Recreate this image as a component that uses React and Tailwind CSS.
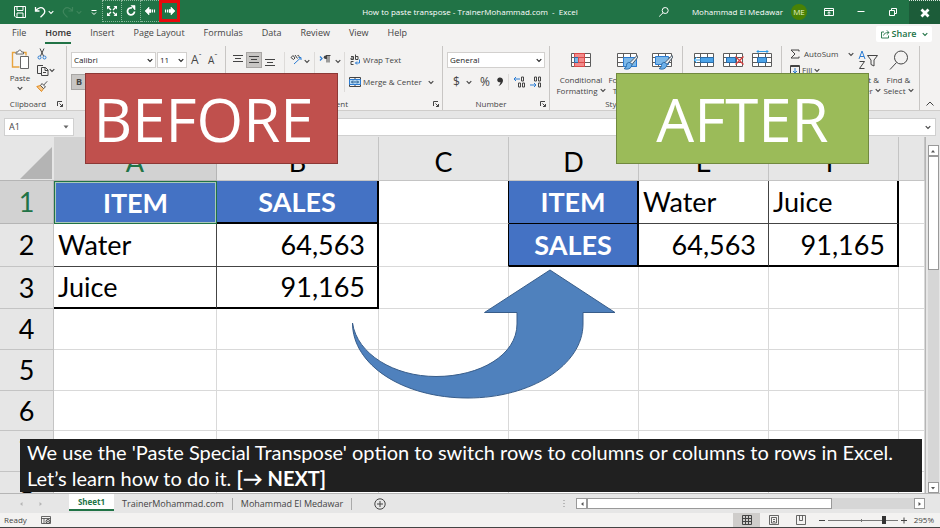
import React from "react";

function Chevron({ className = "" }) {
  return (
    <svg className={"h-[5px] w-[6px] shrink-0 " + className} viewBox="0 0 6 5" fill="none" stroke="currentColor" strokeWidth="1.1">
      <path d="M0.700 1.200 3 3.500l2.300-2.300" />
    </svg>
  );
}

function Icon({ size = "h-4 w-4", box = "0 0 16 16", children }) {
  return (
    <svg className={size + " shrink-0"} viewBox={box} fill="none" stroke="currentColor" strokeWidth="1">
      {children}
    </svg>
  );
}

function IconButton({ label, className = "", children }) {
  return (
    <button type="button" aria-label={label} className={"flex shrink-0 items-center justify-center " + className}>
      {children}
    </button>
  );
}

function TitleBar() {
  return (
    <header className="grid h-6 shrink-0 grid-cols-[1fr_auto_1fr] items-center bg-[#217346] text-white">
      <div className="flex h-full items-center">
        <IconButton label="Save" className="ml-3.5 w-3">
          <Icon size="h-3 w-3" box="0 0 12 12">
            <path d="M.5.5h11v11H2L.5 10zM3 .5v4h6v-4M3 11.500V7h6v4.500" />
          </Icon>
        </IconButton>
        <IconButton label="Undo" className="ml-2 w-3">
          <Icon size="h-3 w-3" box="0 0 12 12">
            <path d="M1.500 1v4h4M1.500 5C4 1.500 7.500.8 9.500 2.800s1.300 4.200-.5 6L6.500 11.300" strokeWidth="1.3" />
          </Icon>
        </IconButton>
        <Chevron className="ml-0.5" />
        <IconButton label="Redo" className="ml-2 w-3 text-[#3f865c]">
          <Icon size="h-3 w-3" box="0 0 12 12">
            <path d="M10.500 1v4h-4M10.500 5C8 1.500 4.500.8 2.500 2.800s-1.300 4.200.5 6l2.500 2.500" strokeWidth="1.2" />
          </Icon>
        </IconButton>
        <Chevron className="ml-0.5 text-[#3f865c]" />
        <IconButton label="Customize toolbar" className="ml-2 w-2">
          <Icon size="h-2 w-2" box="0 0 8 8">
            <path d="M1.500 2.500h5M2 4.500l2 2 2-2" />
          </Icon>
        </IconButton>
        <IconButton label="Full screen" className="ml-1 h-[22px] w-5 self-start border border-dotted border-[#8ab89c]">
          <Icon size="h-3 w-3" box="0 0 12 12">
            <path d="M1 4.500V1h3.500zM11 4.500V1H7.500zM1 7.500V11h3.500zM11 7.500V11H7.500z" fill="currentColor" stroke="none" />
            <path d="M2 2l3 3M10 2 7 5M2 10l3-3M10 10 7 7" strokeWidth="1.4" />
          </Icon>
        </IconButton>
        <IconButton label="Restart" className="h-[22px] w-[19px] self-start border border-l-0 border-dotted border-[#8ab89c]">
          <Icon size="h-3 w-3" box="0 0 12 12">
            <path d="M7 3A3.500 3.500 0 1 0 9.500 6.500" strokeWidth="1.8" />
            <path d="M6 .5h4v4.500z" fill="currentColor" stroke="currentColor" strokeWidth=".6" />
          </Icon>
        </IconButton>
        <IconButton label="Previous" className="h-[22px] w-[18px] self-start border border-x-0 border-dotted border-[#8ab89c]">
          <Icon size="h-3 w-3" box="0 0 12 12">
            <path d="M1 6 5 2v2.500h2v3H5V10z" fill="currentColor" strokeWidth=".6" />
            <path d="M8.500 4.500v3M10.500 4.500v3" strokeWidth="1.1" />
          </Icon>
        </IconButton>
        <IconButton label="Next" className="h-[22px] w-[21px] self-start border-[3px] border-[#e8090c]">
          <Icon size="h-3 w-3" box="0 0 12 12">
            <path d="M11 6 7 2v2.500H5v3h2V10z" fill="currentColor" strokeWidth=".6" />
            <path d="M1.500 4.500v3M3.500 4.500v3" strokeWidth="1.1" />
          </Icon>
        </IconButton>
      </div>
      <h1 className="whitespace-pre text-[8px]">How to paste transpose - TrainerMohammad.com  -  Excel</h1>
      <div className="flex h-full items-center justify-end">
        <IconButton label="Search" className="w-3">
          <Icon size="h-3 w-3" box="0 0 12 12">
            <circle cx="7.200" cy="4.500" r="3" />
            <path d="M5 6.800 1.200 10.500" />
          </Icon>
        </IconButton>
        <span className="ml-5.5 whitespace-nowrap text-[8px]">Mohammad El Medawar</span>
        <span className="ml-2 flex h-4 w-4 items-center justify-center rounded-full bg-[#498205] text-[8px] text-[#e3f0c8]">ME</span>
        <IconButton label="Ribbon display options" className="mr-2.5 ml-4 w-3">
          <Icon size="h-2.5 w-2.5" box="0 0 10 10">
            <path d="M.5 1.500h9v7h-9zM.5 3.500h9M5 8V5M3.500 6 5 4.700 6.500 6" />
          </Icon>
        </IconButton>
        <IconButton label="Minimize" className="w-8">
          <Icon size="h-2 w-2" box="0 0 8 8">
            <path d="M.5 3.500h7" />
          </Icon>
        </IconButton>
        <IconButton label="Restore" className="w-8">
          <Icon size="h-2 w-2" box="0 0 8 8">
            <path d="M.5 2.500h5v5h-5zM2.500 2V.5h5v5H6" />
          </Icon>
        </IconButton>
        <IconButton label="Close" className="h-full w-[31px] border-t border-dotted border-[#d6e6dc] bg-[#1c5c39]">
          <Icon size="h-2.5 w-2.5" box="0 0 10 10">
            <path d="M1.500 1.500l7 7M8.500 1.500l-7 7" strokeWidth="2.8" />
          </Icon>
        </IconButton>
      </div>
    </header>
  );
}

const menuTabs = ["File", "Home", "Insert", "Page Layout", "Formulas", "Data", "Review", "View", "Help"];

function MenuTabs() {
  return (
    <nav className="flex h-5 shrink-0 items-stretch gap-[19px] pr-2 pl-3 text-[9px]">
      {menuTabs.map((tab) => (
        <a
          key={tab}
          href={"#" + tab}
          className={
            tab === "Home"
              ? "flex items-center border-b-2 border-[#217346] font-semibold text-[#333]"
              : "flex items-center border-b-2 border-transparent whitespace-nowrap"
          }
        >
          {tab}
        </a>
      ))}
      <button type="button" className="mt-0.5 ml-auto flex h-4 w-14 items-center justify-center gap-0.5 rounded-xs bg-white text-[9px] font-semibold text-[#217346]">
        <Icon size="h-2.5 w-2.5" box="0 0 10 10">
          <path d="M4 3H1.500v6h7V6.500M3.500 6.500C4 4.500 5.500 3.500 9 3.500M6.800 1.300 9 3.500 6.800 5.700" strokeWidth=".9" />
        </Icon>
        Share
        <Chevron className="ml-1" />
      </button>
    </nav>
  );
}

function Group({ name, caption = "", width, launcher, children }) {
  return (
    <section aria-label={name} className={"flex shrink-0 flex-col border-r border-[#c8c6c4] " + width}>
      <div className="flex flex-1">{children}</div>
      <div className="flex h-3 items-center">
        <span className="flex-1 text-center text-[8px]">{caption}</span>
        {launcher && (
          <IconButton label={name + " settings"} className="mr-0.5 w-2">
            <Icon size="h-2 w-2" box="0 0 8 8">
              <path d="M1.500 6V1.500H6M3.500 3.500l3 3M6.500 4v2.500H4" />
            </Icon>
          </IconButton>
        )}
      </div>
    </section>
  );
}

function DropDown({ label, value, width }) {
  return (
    <label className={"flex h-4 shrink-0 items-center border border-[#d2d0ce] bg-white pr-0.5 text-[#222] " + width}>
      <select aria-label={label} className="min-w-0 flex-1 appearance-none bg-transparent pl-0.5 text-[8px] leading-3 outline-none">
        <option>{value}</option>
      </select>
      <Chevron />
    </label>
  );
}

function AlignIcon({ y }) {
  return (
    <Icon size="h-4 w-3.5" box="0 0 14 16">
      <path d={`M2 ${y}h10M4 ${y + 3}h6M2 ${y + 6}h10`} />
    </Icon>
  );
}

function GridIcon({ children }) {
  return (
    <Icon size="h-5 w-[22px]" box="0 0 22 20">
      <path d="M1.500 3.500h19v13h-19zM1.500 7.500h19M1.500 12.500h19M7.500 3.500v13M14.500 3.500v13" fill="#fff" stroke="#5c5c5c" />
      {children}
    </Icon>
  );
}

const brush = (
  <g>
    <path d="M21 5.500 14 12.500l2 2 6-7.500z" fill="#e9eef3" stroke="#4a5a6a" />
    <path d="M14 12.500c-2.500-.5-3.500 1-3.500 3 0 1.500-1 2.500-2.500 3 3 1.500 7.500.5 8-4z" fill="#6cb0ea" stroke="#2b6ca8" />
  </g>
);

function BigButton({ label, lines, width, icon }) {
  return (
    <button type="button" aria-label={label} className={"flex shrink-0 flex-col items-center text-[8px] leading-[11px] " + width}>
      {icon}
      {lines && <span className="mt-1 whitespace-nowrap">{lines[0]}</span>}
      {lines && (
        <span className="flex items-center gap-0.5 whitespace-nowrap">
          {lines[1]} <Chevron />
        </span>
      )}
    </button>
  );
}

function Ribbon() {
  return (
    <div className="flex h-[67px] shrink-0 overflow-hidden border-b border-[#cfcdcb] pt-0.5">
      <Group name="Clipboard" caption="Clipboard" width="w-[67px]" launcher>
        <button type="button" className="ml-2.5 flex w-5 flex-col items-center pt-0.5 text-[8px] leading-3">
          <Icon size="h-[22px] w-5" box="0 0 20 22">
            <path d="M5.500 4.500H2.500v14.500h7M13.500 4.500h2.500V7.500" stroke="#e8a33d" strokeWidth="1.4" />
            <path d="M6 6V4h2c0-2.500 3.500-2.500 3.500 0h2v2zM10.500 8.500h8v12h-8z" fill="#fff" stroke="#666" />
          </Icon>
          <span className="mt-0.5">Paste</span>
          <Chevron className="mt-0.5" />
        </button>
        <div className="ml-1.5 flex flex-col gap-1 pt-0.5">
          <IconButton label="Cut" className="h-3 w-3">
            <Icon size="h-3 w-3" box="0 0 12 12">
              <path d="M4 .5l3.500 7.500M8 .5l-3.500 7.500" />
              <circle cx="3.500" cy="9.500" r="1.500" stroke="#2b7cd3" />
              <circle cx="8.500" cy="9.500" r="1.500" stroke="#2b7cd3" />
            </Icon>
          </IconButton>
          <IconButton label="Copy" className="h-3 w-5 justify-between">
            <Icon size="h-3 w-3" box="0 0 12 12">
              <path d="M4 9.500H.5v-8H6M4.500 3.500h4l2.500 2.500v5.500H4.500zM8 3.500V6.500h3M6 8.500h3" />
            </Icon>
            <Chevron />
          </IconButton>
          <IconButton label="Format Painter" className="h-3 w-3">
            <Icon size="h-3 w-3" box="0 0 12 12">
              <path d="M.8 6.500 4.500 5.500 7.500 8.500 5.500 11.500z" fill="#f8c88a" stroke="#e08a1e" />
              <path d="M4.500 5.500l1.500-2 3.500 3.500-2 1.500zM7.800 5l3.400-3.700" stroke="#555" />
            </Icon>
          </IconButton>
        </div>
      </Group>

      <Group name="Font" width="w-[159px]">
        <div className="flex flex-col gap-1.5 pt-1.5 pl-1">
          <div className="flex items-center">
            <DropDown label="Font family" value="Calibri" width="w-[85px]" />
            <DropDown label="Font size" value="11" width="ml-px w-[30px]" />
            <button type="button" className="ml-1 flex items-start text-[12px] leading-4">A<span className="text-[8px] leading-2">ˆ</span></button>
            <button type="button" className="ml-1.5 flex items-start text-[10px] leading-4">A<span className="text-[8px] leading-2">ˇ</span></button>
          </div>
          <button type="button" aria-pressed="true" className="h-4 w-4 border border-[#a8a6a4] bg-[#c8c6c4] text-[9px] leading-3 font-bold">B</button>
        </div>
      </Group>

      <Group name="Alignment" caption="Alignment" width="w-[217px]" launcher>
        <div className="flex items-start pt-1.5 pl-1">
          <IconButton label="Top align" className="h-4 w-4"><AlignIcon y={3.5} /></IconButton>
          <IconButton label="Middle align" className="h-4 w-4 border border-[#a8a6a4] bg-[#c8c6c4]"><AlignIcon y={4.5} /></IconButton>
          <IconButton label="Bottom align" className="h-4 w-4"><AlignIcon y={7.5} /></IconButton>
          <IconButton label="Orientation" className="ml-1.5 h-10 w-[30px] items-start gap-0.5 border-l border-[#dddbd9] pt-px">
            <Icon size="h-3 w-3" box="0 0 12 12">
              <path d="M1 4.500 3 2.500l2 2.500-1.500 1.500zM5 2 7.500 5.500M7.500 2.500c1-.5 2 .5 1.500 1.500" />
              <path d="M4 11 11 4.500M8.500 4.500H11V7" stroke="#2b7cd3" />
            </Icon>
            <Chevron className="mt-1.5" />
          </IconButton>
          <IconButton label="Text direction" className="h-10 w-[30px] items-start gap-1 border-l border-[#dddbd9] pt-px">
            <Icon size="h-3 w-3" box="0 0 12 12">
              <path d="M1 3.500 3 5.500 1 7.500" stroke="#2b7cd3" strokeWidth="1.200" />
              <path d="M8 9.500V2.500M10 9.500V2.500M11.500 2.500H7" />
              <path d="M8 2.500H6.500a1.700 1.700 0 0 0 0 3.500H8z" fill="currentColor" stroke="none" />
            </Icon>
            <Chevron className="mt-1.5" />
          </IconButton>
        </div>
        <div className="mt-1.5 flex h-10 flex-col gap-1.5 border-l border-[#dddbd9] pl-1 text-[8px]">
          <button type="button" className="flex h-4 items-center gap-0.5 whitespace-nowrap">
            <Icon size="h-3 w-3" box="0 0 12 12">
              <path d="M2 2.500h2.500V5.500H2V4h2.500M6.500.5v5H9V2.500H6.500M4.500 7.500H2v3h2.500" />
              <path d="M10.500 5.500V9h-4M8 7.500 6.500 9 8 10.500" stroke="#2b7cd3" />
            </Icon>
            Wrap Text
          </button>
          <button type="button" className="flex h-4 items-center gap-0.5 whitespace-nowrap">
            <Icon size="h-3 w-3" box="0 0 12 12">
              <path d="M.5 1.500h11v9H.5zM6 1.500v2M6 8.500v2" />
              <path d="M.5 3.500h11v5H.5z" fill="#b5d9f5" stroke="#2b7cd3" />
              <path d="M2.500 6h7M4 4.500 2.500 6 4 7.500M8 4.500 9.500 6 8 7.500" stroke="#2b5f8f" />
            </Icon>
            Merge &amp; Center
            <Chevron className="ml-1" />
          </button>
        </div>
      </Group>

      <Group name="Number" caption="Number" width="w-[107px]" launcher>
        <div className="flex flex-col gap-1.5 pt-1.5 pl-1">
          <DropDown label="Number format" value="General" width="w-[98px]" />
          <div className="flex h-4 items-center">
            <button type="button" className="ml-1.5 text-[12px]">$</button>
            <Chevron className="ml-1.5" />
            <button type="button" className="ml-2 text-[12px]">%</button>
            <IconButton label="Comma style" className="ml-1.5 w-2">
              <Icon size="h-3 w-2" box="0 0 8 12">
                <path d="M4 1.500a2.400 2.400 0 1 0 .5 4.600C4.300 7.800 3.500 8.800 2.500 10 5.500 8.800 7 6.700 7 4.500 7 2.500 5.500 1.500 4 1.500z" fill="#333" stroke="none" />
              </Icon>
            </IconButton>
            <span className="ml-1 h-4 w-px bg-[#dddbd9]" />
            <IconButton label="Increase decimal" className="ml-1 w-3">
              <Icon size="h-3 w-3" box="0 0 12 12">
                <path d="M8.500 1h2v4h-2zM5.500 7h2v4h-2zM9.500 7h2v4h-2z" />
                <path d="M7 3H1M3 1 1 3l2 2" stroke="#2b7cd3" />
              </Icon>
            </IconButton>
            <IconButton label="Decrease decimal" className="ml-1 w-3">
              <Icon size="h-3 w-3" box="0 0 12 12">
                <path d="M5.500 1h2v4h-2zM9.500 1h2v4h-2zM9.500 7h2v4h-2z" />
                <path d="M1 9h6M5 7l2 2-2 2" stroke="#2b7cd3" />
              </Icon>
            </IconButton>
          </div>
        </div>
      </Group>

      <Group name="Styles" caption="Styles" width="w-[133px]">
        <div className="flex pt-1 pl-1">
          <BigButton
            width="w-[54px]"
            lines={["Conditional", "Formatting"]}
            icon={
              <GridIcon>
                <path d="M4.500 3.500h10v4h-10zM4.500 12.500h10v4h-10z" fill="#f28b8b" stroke="#d94a4a" />
                <path d="M4.500 7.500h4v5h-4z" fill="#7db8e8" stroke="#2b6ca8" />
                <path d="M8.500 7.500h6v5h-6z" fill="#f28b8b" stroke="#d94a4a" />
              </GridIcon>
            }
          />
          <BigButton width="w-[38px]" lines={["Format as", "Table"]} icon={<GridIcon><path d="M7.500 7.500h13v9h-13z" fill="#7db8e8" stroke="#2b7cd3" />{brush}</GridIcon>} />
          <BigButton label="Cell Styles" width="w-8" icon={<GridIcon><path d="M4.500 6.500h13v8h-13z" fill="#7db8e8" stroke="#2b7cd3" />{brush}</GridIcon>} />
        </div>
      </Group>

      <Group name="Cells" width="w-[99px]">
        <div className="flex pt-1 pl-1.5">
          <BigButton label="Insert cells" width="w-[29px]" icon={<GridIcon><path d="M7.500 7.500h13v5h-13z" fill="#4ba3e8" stroke="#2b6ca8" /><path d="M8 10H1M4 7l-3 3 3 3" stroke="#2b9be8" /></GridIcon>} />
          <BigButton label="Delete cells" width="w-[29px]" icon={<GridIcon><path d="M4.500 7.500h9v5h-9z" fill="#4ba3e8" stroke="#2b6ca8" /><path d="M13.500 6.500l8 8M21.500 6.500l-8 8" stroke="#e03c3c" strokeWidth="1.200" /></GridIcon>} />
          <BigButton label="Format cells" width="w-[29px]" icon={<GridIcon><path d="M6.500 7.500h9v5h-9z" fill="#4ba3e8" stroke="#2b6ca8" /><path d="M6 1.500h11M7.500 0 6 1.500 7.500 3M15.500 0 17 1.500 15.500 3" stroke="#2b9be8" /></GridIcon>} />
        </div>
      </Group>

      <Group name="Editing" width="w-[138px]">
        <div className="flex w-[70px] flex-col pl-2 text-[8px]">
          <button type="button" className="flex h-4 items-center gap-1 whitespace-nowrap">
            <Icon size="h-2.5 w-2.5" box="0 0 10 10">
              <path d="M9 2.500V1H1l4 4-4 4h8V7.500" />
            </Icon>
            AutoSum
            <Chevron className="ml-1.5" />
          </button>
          <button type="button" className="flex h-4 items-center gap-0.5 whitespace-nowrap">
            <Icon size="h-2.5 w-2.5" box="0 0 10 10">
              <path d="M.5.5h9v9h-9zM.5 1.500h9" />
              <path d="M5 3v5M3 6l2 2 2-2" stroke="#2b7cd3" />
            </Icon>
            Fill
            <Chevron />
          </button>
        </div>
        <div className="flex pt-1">
          <BigButton
            width="w-[31px]"
            lines={["Sort &", "Filter"]}
            icon={
              <Icon size="h-5 w-5" box="0 0 20 20">
                <path d="M1 9 4 1l3 8M2 6.500h4" stroke="#2b7cd3" />
                <path d="M1.500 11.500h5l-5 7h5M9.500 5.500h10l-3.500 4.500v6l-3-1.500V10z" />
              </Icon>
            }
          />
          <BigButton
            width="w-[31px]"
            lines={["Find &", "Select"]}
            icon={
              <Icon size="h-5 w-5" box="0 0 20 20">
                <circle cx="12" cy="7.500" r="6.500" />
                <path d="M7.500 12.500 1 19.500" />
              </Icon>
            }
          />
        </div>
      </Group>
      <IconButton label="Collapse ribbon" className="mr-1.5 mb-0.5 ml-auto w-2 self-end">
        <Icon size="h-2 w-2" box="0 0 8 8">
          <path d="M.5 5.500 4 2l3.500 3.500" />
        </Icon>
      </IconButton>
    </div>
  );
}

function FormulaBar() {
  return (
    <div className="flex h-[26px] shrink-0 items-end bg-[#e6e6e6] px-1 pb-px">
      <label className="flex h-4.5 w-[70px] shrink-0 items-center border border-[#d0d0d0] bg-white pr-1">
        <input aria-label="Name box" defaultValue="A1" className="w-full min-w-0 bg-transparent pl-1 text-[9px] outline-none" />
        <svg className="h-1 w-1.5 shrink-0" viewBox="0 0 6 4"><path d="M.5.5h5L3 3.500z" fill="#666" /></svg>
      </label>
      <label className="ml-6 flex h-4.5 flex-1 items-center border border-[#d0d0d0] bg-white pr-1">
        <input aria-label="Formula" className="w-full min-w-0 bg-transparent outline-none" />
        <Chevron />
      </label>
    </div>
  );
}

const columns = ["A", "B", "C", "D", "E", "F", ""];

const plain = "border-[#d9d9d9]";
const cells = {
  A1: ["ITEM", "bg-[#4472c4] text-center font-bold text-white border border-[#217346] outline outline-1 -outline-offset-2 outline-[#a9c9b8]"],
  B1: ["SALES", "bg-[#4472c4] text-center font-bold text-white border-black border-b-2 border-r-2"],
  A2: ["Water", "border-[#444] pl-1"],
  B2: ["64,563", "border-[#444] border-r-2 border-r-black pr-3 text-right"],
  A3: ["Juice", "border-[#444] border-b-2 border-b-black pl-1"],
  B3: ["91,165", "border-black border-b-2 border-r-2 pr-3 text-right"],
  C1: ["", "border-[#d9d9d9] border-r-black"],
  C2: ["", "border-[#d9d9d9] border-r-black"],
  D1: ["ITEM", "bg-[#4472c4] text-center font-bold text-white border-black border-r-2"],
  D2: ["SALES", "bg-[#4472c4] text-center font-bold text-white border-black border-r-2 border-b-2"],
  E1: ["Water", "border-[#444] pl-1"],
  F1: ["Juice", "border-[#444] border-r-2 border-r-black pl-1"],
  E2: ["64,563", "border-[#444] border-b-2 border-b-black pr-3 text-right"],
  F2: ["91,165", "border-black border-r-2 border-b-2 pr-3 text-right"],
};

const rowHeights = ["h-[43px]", "h-[43px]", "h-[42px]", "h-[41px]", "h-[41px]", "h-[40px]", "h-[41px]", "h-[41px]"];

function Sheet() {
  return (
    <div className="flex-1 overflow-hidden bg-white">
      <table className="w-full table-fixed border-separate border-spacing-0 font-[Lato,'Liberation_Sans',sans-serif] text-[27px] leading-8 text-black">
        <colgroup>
          <col className="w-[54px]" />
          <col className="w-[163px]" />
          <col className="w-[162px]" />
          <col className="w-[130px]" />
          <col className="w-[130px]" />
          <col className="w-[130px]" />
          <col className="w-[130px]" />
          <col />
        </colgroup>
        <thead>
          <tr className="h-11 bg-[#e6e6e6]">
            <td className="border-b border-[#b5b5b5] p-0 align-bottom">
              <svg className="mr-0.5 mb-px ml-auto h-8 w-8" viewBox="0 0 32 32"><path d="M32 0v32H0z" fill="#b4b4b4" /></svg>
            </td>
            {columns.map((c, i) => (
              <th
                key={i}
                scope="col"
                className={
                  c === "A"
                    ? "border-r border-b border-[#b5b5b5] bg-[#d2d2d2] p-0 pt-1.5 font-normal text-[#217346]"
                    : "border-r border-b border-[#c4c4c4] p-0 pt-1.5 font-normal"
                }
              >
                {c}
              </th>
            ))}
          </tr>
        </thead>
        <tbody>
          {rowHeights.map((h, r) => (
            <tr key={r} className={h}>
              <th
                scope="row"
                className={
                  r === 0
                    ? "border-r border-b border-[#b5b5b5] bg-[#d2d2d2] p-0 font-normal text-[#217346]"
                    : "border-r border-b border-[#c4c4c4] bg-[#e6e6e6] p-0 font-normal"
                }
              >
                {r + 1}
              </th>
              {columns.map((c, i) => {
                const cell = cells[c + (r + 1)] || ["", plain];
                return (
                  <td key={i} className={"border-r border-b p-0 " + cell[1]}>
                    {cell[0]}
                  </td>
                );
              })}
            </tr>
          ))}
        </tbody>
      </table>
    </div>
  );
}

function ScrollButton({ label, d }) {
  return (
    <IconButton label={label} className="h-[11px] w-[11px] border border-[#999] bg-white">
      <svg className="h-1.5 w-1.5" viewBox="0 0 6 6"><path d={d} fill="#555" /></svg>
    </IconButton>
  );
}

function VerticalScroll() {
  return (
    <div className="flex w-[15px] shrink-0 flex-col items-center border-l border-[#b5b5b5] bg-[#e6e6e6] pt-2">
      <ScrollButton label="Scroll up" d="M1 4.500h4L3 2z" />
      <div className="w-[11px] flex-1 bg-[#d6d6d6]">
        <div className="h-[35%] border border-[#999] bg-white" />
      </div>
      <ScrollButton label="Scroll down" d="M1 2h4L3 4.500z" />
    </div>
  );
}

function SheetTabs() {
  return (
    <div className="flex h-5 shrink-0 items-center border-t border-[#b5b5b5] bg-[#e6e6e6] text-[9px]">
      <span className="flex w-[69px] justify-center gap-3.5 pr-2">
        <svg className="h-1.5 w-1.5" viewBox="0 0 6 6"><path d="M4.500 1v4L2 3z" fill="#b5b5b5" /></svg>
        <svg className="h-1.5 w-1.5" viewBox="0 0 6 6"><path d="M1.500 1v4L4 3z" fill="#b5b5b5" /></svg>
      </span>
      <button type="button" className="h-[17px] w-[45px] self-start border-b-2 border-[#217346] bg-white text-[8px] font-bold text-[#217346]">Sheet1</button>
      <button type="button" className="h-3 border-r border-[#aaa] px-2 leading-3">TrainerMohammad.com</button>
      <button type="button" className="h-3 border-r border-[#aaa] px-2 leading-3">Mohammad El Medawar</button>
      <IconButton label="New sheet" className="ml-5.5 w-3">
        <Icon size="h-3 w-3" box="0 0 12 12">
          <circle cx="6" cy="6" r="5.200" />
          <path d="M6 3v6M3 6h6" />
        </Icon>
      </IconButton>
      <div className="ml-auto flex w-[378px] items-center pr-[15px]">
        <svg className="mr-2.5 h-2 w-1 shrink-0" viewBox="0 0 4 8"><path d="M1.500 0h1v1h-1zM1.500 3h1v1h-1zM1.500 6h1v1h-1z" fill="#888" /></svg>
        <ScrollButton label="Scroll left" d="M4.500 1v4L2 3z" />
        <div className="h-[11px] flex-1 bg-[#d6d6d6]">
          <div className="h-full w-[75%] border border-[#999] bg-white" />
        </div>
        <ScrollButton label="Scroll right" d="M1.500 1v4L4 3z" />
      </div>
    </div>
  );
}

function StatusBar() {
  return (
    <footer className="flex h-[15px] shrink-0 items-center border-b border-[#444] bg-[#f3f2f1] text-[8px]">
      <span className="ml-1">Ready</span>
      <IconButton label="Record macro" className="ml-3.5 w-2.5">
        <Icon size="h-2.5 w-2.5" box="0 0 10 10">
          <path d="M.5 1.500h9v7h-9zM.5 3.500h9M3 3.500v5" strokeWidth=".8" />
          <circle cx="7" cy="6.500" r="2" fill="#f3f2f1" />
          <circle cx="7" cy="6.500" r=".8" fill="#444" stroke="none" />
        </Icon>
      </IconButton>
      <div className="ml-auto flex h-full items-center">
        <IconButton label="Normal view" className="h-full w-[27px] bg-[#cfcdcb]">
          <Icon size="h-2.5 w-2.5" box="0 0 10 10"><path d="M.5.5h9v9h-9zM.5 3.500h9M.5 6.500h9M3.500.5v9M6.500.5v9" /></Icon>
        </IconButton>
        <IconButton label="Page layout view" className="h-full w-[27px]">
          <Icon size="h-2.5 w-2.5" box="0 0 10 10"><path d="M.5.5h9v9h-9zM2.500 2.500h5v5.500h-5zM4 4.500h2M4 6.500h2" strokeWidth=".8" /></Icon>
        </IconButton>
        <IconButton label="Page break view" className="h-full w-[27px]">
          <Icon size="h-2.5 w-2.5" box="0 0 10 10"><path d="M.5.5h9v9h-9zM3.500.5v5h3v-5" strokeWidth=".8" /></Icon>
        </IconButton>
        <IconButton label="Zoom out" className="ml-1 w-2"><Icon size="h-2 w-2" box="0 0 8 8"><path d="M1 4.500h6" /></Icon></IconButton>
        <div className="mx-0.5 flex h-2 w-[70px] items-center">
          <span className="h-px flex-1 bg-[#777]" />
          <span className="h-[3px] w-px bg-[#777]" />
          <span className="h-px w-5 bg-[#777]" />
          <span className="h-2 w-1 bg-[#333]" />
          <span className="h-px w-3 bg-[#777]" />
        </div>
        <IconButton label="Zoom in" className="w-2"><Icon size="h-2 w-2" box="0 0 8 8"><path d="M1 4.500h6M4 1.500v6" /></Icon></IconButton>
        <span className="w-8 pr-1.5 text-right">295%</span>
      </div>
    </footer>
  );
}

export default function App() {
  return (
    <div className="relative flex h-screen flex-col overflow-hidden bg-[#f3f2f1] font-['Open_Sans','Noto_Sans',sans-serif] text-[#444]">
      <TitleBar />
      <MenuTabs />
      <Ribbon />
      <FormulaBar />
      <main className="flex min-h-0 flex-1">
        <Sheet />
        <VerticalScroll />
      </main>
      <SheetTabs />
      <StatusBar />

      <div className="absolute top-[73px] left-[85px] flex h-[91px] w-[253px] items-center justify-center border border-[#8c3836] bg-[#c0504d] pr-4 text-[60px] text-white">
        BEFORE
      </div>
      <div className="absolute top-[73px] left-[616px] flex h-[91px] w-[253px] items-center justify-center border border-[#71893f] bg-[#9bbb59] text-[60px] text-white">
        AFTER
      </div>
      <svg className="absolute top-[268px] left-[350px] h-[132px] w-[268px]" viewBox="0 0 268 132" aria-hidden="true">
        <path
          d="M200 2 265 44.500H233V56C233 97 181 130 118 130C53 130 2.500 97 2.500 55C7 86 44 108.500 86 108.500C130 108.500 167 87 167 56V44.500H134.500Z"
          fill="#4f81bd"
          stroke="#385d8a"
          strokeWidth="1"
        />
      </svg>
      <p className="absolute right-[18px] bottom-9 left-5 h-[53px] bg-[#202020] pl-[7px] font-[Lato,'Liberation_Sans',sans-serif] text-[20px] leading-[26px] text-white">
        We use the 'Paste Special Transpose' option to switch rows to columns or columns to rows in Excel.
        <br />
        Let’s learn how to do it. <strong>[→ NEXT]</strong>
      </p>
    </div>
  );
}
